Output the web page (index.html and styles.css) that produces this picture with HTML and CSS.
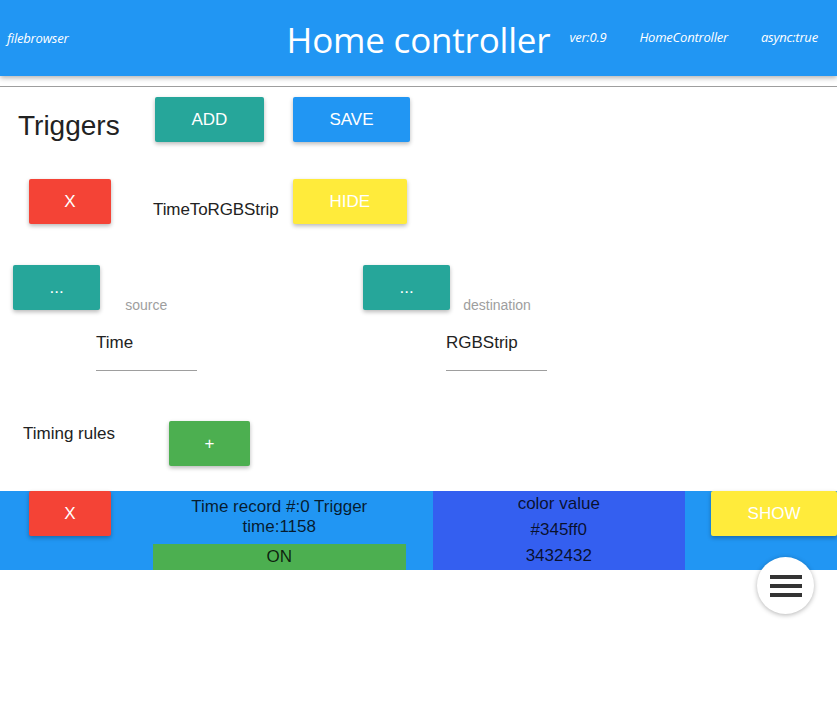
FILE: index.html
```html
<!DOCTYPE html>
<html lang="en">
<head>
<meta charset="utf-8">
<title>Home controller</title>
<link rel="stylesheet" href="styles.css">
</head>
<body>
<header class="topbar">
  <div class="topbar-left"><span class="meta">filebrowser</span></div>
  <div class="topbar-title">Home controller</div>
  <div class="topbar-right">
    <span class="meta">ver:0.9</span>
    <span class="meta">HomeController</span>
    <span class="meta">async:true</span>
  </div>
</header>
<hr class="divider">
<main class="page">
  <div class="row row-head">
    <h1 class="page-title">Triggers</h1>
    <button class="btn btn-teal btn-add">ADD</button>
    <button class="btn btn-blue btn-save">SAVE</button>
  </div>

  <div class="row row-trigger">
    <button class="btn btn-red btn-remove">X</button>
    <span class="trigger-name">TimeToRGBStrip</span>
    <button class="btn btn-yellow btn-hide">HIDE</button>
  </div>

  <div class="endpoints">
    <div class="endpoint">
      <div class="endpoint-head">
        <button class="btn btn-teal">...</button>
        <span class="endpoint-label label-source">source</span>
      </div>
      <div class="field">Time</div>
    </div>
    <div class="endpoint">
      <div class="endpoint-head">
        <button class="btn btn-teal">...</button>
        <span class="endpoint-label label-dest">destination</span>
      </div>
      <div class="field">RGBStrip</div>
    </div>
  </div>

  <div class="row row-rules">
    <span class="rules-label">Timing rules</span>
    <button class="btn btn-green btn-plus">+</button>
  </div>

  <div class="record">
    <button class="btn btn-red record-remove">X</button>
    <div class="record-info">
      <div class="record-text">Time record #:0 Trigger<br>time:1158</div>
      <div class="record-state">ON</div>
    </div>
    <div class="record-color">
      <div>color value</div>
      <div>#345ff0</div>
      <div>3432432</div>
    </div>
    <button class="btn btn-yellow record-show">SHOW</button>
  </div>
</main>

<button class="fab" aria-label="menu">
  <span class="fab-bar"></span>
  <span class="fab-bar"></span>
  <span class="fab-bar"></span>
</button>
</body>
</html>
```
FILE: styles.css
```css
html, body {
  margin: 0;
  padding: 0;
  background: #fff;
}

body {
  font-family: "Liberation Sans", Arial, sans-serif;
  color: #222;
  width: 837px;
  overflow: hidden;
}

/* ---------- header ---------- */
.topbar {
  height: 76px;
  background: #2196f3;
  color: #fff;
  display: grid;
  grid-template-columns: 1fr auto 1fr;
  align-items: center;
  box-shadow: 0 2px 5px rgba(0, 0, 0, 0.3);
  font-family: "Open Sans", "Noto Sans", sans-serif;
}

.topbar-left {
  padding-left: 7px;
  padding-bottom: 2px;
}

.meta {
  font-style: italic;
  font-size: 13px;
  letter-spacing: -0.2px;
}

.topbar-title {
  font-size: 35px;
  font-weight: 400;
  letter-spacing: -0.2px;
  padding-top: 2px;
}

.topbar-right {
  display: flex;
  gap: 33px;
  padding-left: 19px;
  padding-bottom: 2px;
}

.divider {
  border: 0;
  border-top: 1px solid #9e9e9e;
  height: 0;
  margin: 10px 0 0;
}

/* ---------- buttons ---------- */
.btn {
  height: 45px;
  padding: 0 36.5px;
  border: 0;
  border-radius: 2px;
  font-family: "Liberation Sans", Arial, sans-serif;
  font-size: 17px;
  color: #fff;
  box-shadow: 0 2px 4px rgba(0, 0, 0, 0.28);
  flex: none;
  cursor: pointer;
}

.btn-teal { background: #26a69a; }
.btn-blue { background: #2196f3; }
.btn-red { background: #f44336; }
.btn-yellow { background: #ffeb3b; }
.btn-green { background: #4caf50; }

/* ---------- rows ---------- */
.row {
  display: flex;
  align-items: flex-start;
}

.row-head {
  padding-top: 10px;
}

.page-title {
  margin: 14px 0 0 18px;
  font-size: 28px;
  font-weight: 400;
  line-height: 30px;
  width: 104px;
}

.btn-add { margin-left: 33px; }
.btn-save { margin-left: 29px; }

.row-trigger {
  margin-top: 37px;
}

.btn-remove {
  margin-left: 29px;
  width: 82px;
  padding: 0;
}

.trigger-name {
  margin: 21px 0 0 42px;
  font-size: 17px;
  line-height: 20px;
  width: 140px;
  letter-spacing: -0.1px;
}

/* ---------- endpoints ---------- */
.endpoints {
  display: flex;
  margin-top: 41px;
}

.endpoint {
  width: 350px;
  padding-left: 13px;
  box-sizing: border-box;
}

.endpoint-head {
  display: flex;
  align-items: flex-start;
  height: 45px;
}

.endpoint-label {
  font-size: 14px;
  color: #9e9e9e;
  margin-top: 32px;
  line-height: 16px;
}

.label-source { margin-left: 25px; }
.label-dest { margin-left: 13px; }

.field {
  margin: 23px 0 0 83px;
  width: 101px;
  font-size: 17px;
  line-height: 20px;
  padding-bottom: 17px;
  border-bottom: 1px solid #9e9e9e;
}

/* ---------- rules ---------- */
.row-rules {
  margin-top: 50px;
}

.rules-label {
  margin: 3px 0 0 23px;
  font-size: 17px;
  line-height: 20px;
  width: 146px;
}

.btn-plus {
  width: 81px;
  padding: 0;
}

/* ---------- record ---------- */
.record {
  margin-top: 25px;
  height: 79px;
  background: #2196f3;
  display: flex;
  align-items: flex-start;
  color: rgba(0, 0, 0, 0.82);
}

.record-remove {
  margin-left: 29px;
  width: 82px;
  padding: 0;
}

.record-info {
  margin-left: 42px;
  width: 253px;
  text-align: center;
  font-size: 17px;
}

.record-text {
  line-height: 20px;
  padding-top: 6px;
}

.record-state {
  margin-top: 7px;
  height: 26px;
  line-height: 26px;
  background: #4caf50;
}

.record-color {
  margin-left: 27px;
  width: 253px;
  height: 79px;
  background: #345ff0;
  text-align: center;
  font-size: 17px;
  line-height: 26px;
}

.record-show {
  margin-left: 26px;
  width: 126px;
  padding: 0;
}

/* ---------- floating menu ---------- */
.fab {
  position: fixed;
  left: 757px;
  top: 557px;
  width: 57px;
  height: 57px;
  border-radius: 50%;
  border: 0;
  background: #fff;
  box-shadow: 0 1px 5px rgba(0, 0, 0, 0.3);
  display: flex;
  flex-direction: column;
  align-items: center;
  justify-content: center;
  gap: 5px;
  padding: 0;
}

.fab-bar {
  display: block;
  width: 32px;
  height: 4px;
  background: #333;
}
```
